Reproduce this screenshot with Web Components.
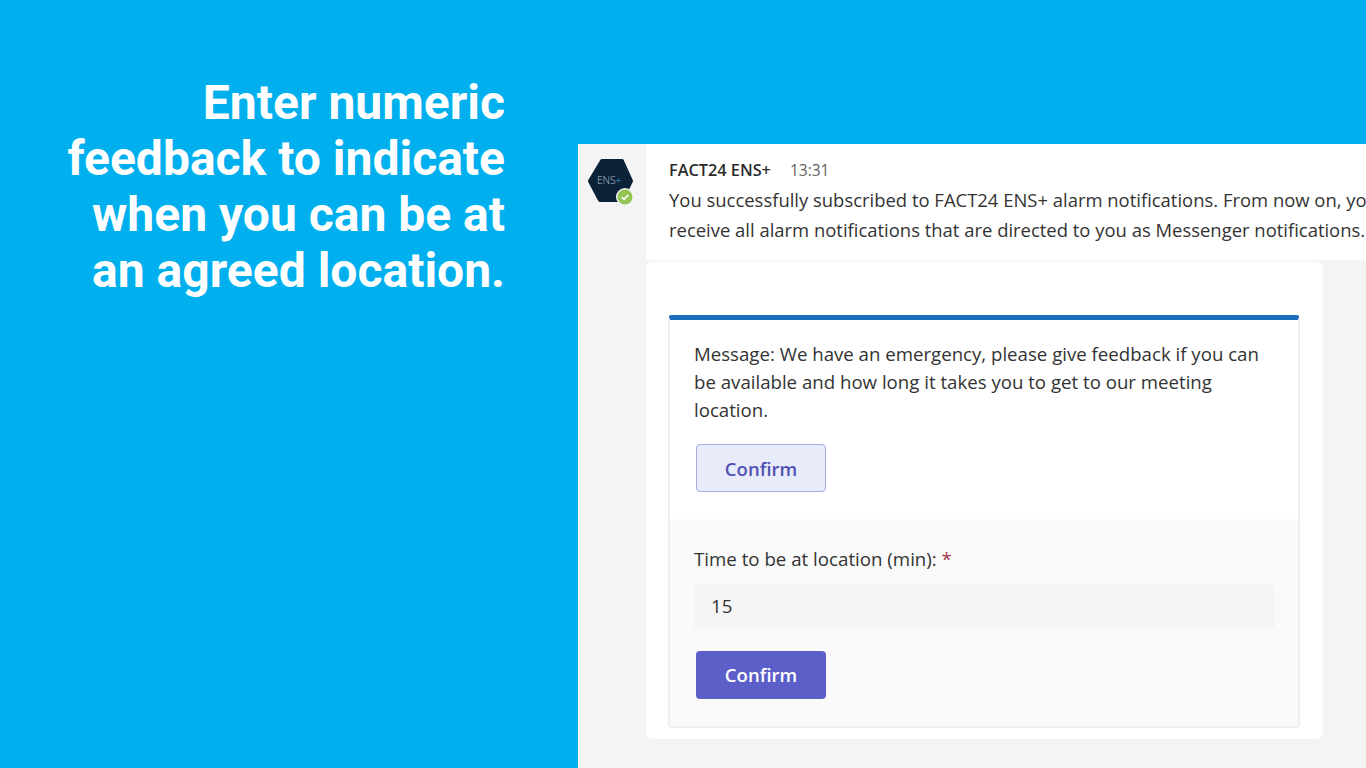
<!DOCTYPE html>
<html lang="en">
<head>
<meta charset="utf-8">
<title>FACT24 ENS+</title>
<style>
  html, body { margin: 0; height: 100%; }
  body { width: 1366px; height: 768px; overflow: hidden; background: #00afee; display: flex; }
</style>
</head>
<body>
<promo-panel>Enter numeric feedback to indicate when you can be at an agreed location.</promo-panel>
<chat-window>
  <chat-header name="FACT24 ENS+" time="13:31"><span>You successfully subscribed to FACT24 ENS+ alarm notifications. From now on, you</span><br><span>receive all alarm notifications that are directed to you as Messenger notifications.</span></chat-header>
  <alarm-card>
    <span slot="message">Message: We have an emergency, please give feedback if you can be available and how long it takes you to get to our meeting location.</span>
    <number-form slot="form" label="Time to be at location (min):" value="15"></number-form>
  </alarm-card>
</chat-window>

<script>
const TEAMS_FONT = `"Open Sans", "Noto Sans", sans-serif`;

class PromoPanel extends HTMLElement {
  constructor() {
    super();
    this.attachShadow({ mode: 'open' });
    this.shadowRoot.innerHTML = `
      <style>
        :host { display: block; flex: 0 0 578px; box-sizing: border-box; padding: 75px 73px 0 60px; }
        h1 {
          margin: 0; text-align: right; color: #fff;
          font: 700 48px/56px Roboto, sans-serif;
        }
      </style>
      <h1><slot></slot></h1>`;
  }
}

class ChatWindow extends HTMLElement {
  constructor() {
    super();
    this.attachShadow({ mode: 'open' });
    this.shadowRoot.innerHTML = `
      <style>
        :host {
          display: block; flex: 1; min-width: 0; margin-top: 144px;
          background: #f4f4f4; overflow: hidden;
          font-family: ${TEAMS_FONT}; color: #2b2b2b;
        }
      </style>
      <slot></slot>`;
  }
}

class ChatHeader extends HTMLElement {
  constructor() {
    super();
    this.attachShadow({ mode: 'open' });
    this.shadowRoot.innerHTML = `
      <style>
        :host { display: flex; height: 118px; }
        .rail { flex: 0 0 68px; box-sizing: border-box; padding: 14px 0 0 9px; }
        .avatar { position: relative; width: 46px; height: 46px; }
        .avatar svg { display: block; }
        .logo {
          position: absolute; left: 10px; top: 16px; letter-spacing: -.2px;
          font: 300 10.500px/12px "Open Sans", sans-serif; color: #b4c0ca;
        }
        .logo i { font-style: normal; color: #3a9cc8; }
        .status {
          position: absolute; left: 29px; top: 30px; width: 18px; height: 18px;
        }
        .body {
          flex: 1; min-width: 0; background: #fff; box-sizing: border-box;
          padding: 14px 0 0 23px; border-bottom: 2px solid #f6f6f6;
        }
        .meta { display: flex; align-items: baseline; gap: 19px; height: 27px; line-height: 24px; }
        .name { font-size: 16.300px; font-weight: 600; color: #2b2b2b; }
        .time { font-size: 15.500px; color: #616161; }
        .text { font-size: 18.450px; line-height: 30px; white-space: nowrap; color: #333; }
      </style>
      <div class="rail">
        <div class="avatar">
          <svg width="46" height="46" viewBox="0 0 46 46">
            <path d="M15 3H35L44 23L35 42H13L3 23Z" fill="#0b2239" stroke="#0b2239" stroke-width="4" stroke-linejoin="round"/>
          </svg>
          <span class="logo">ENS<i>+</i></span>
          <svg class="status" viewBox="0 0 18 18">
            <circle cx="9" cy="9" r="9" fill="#f4f4f4"/>
            <circle cx="9" cy="9" r="7.500" fill="#92c353"/>
            <path d="M5.700 9.200l2.300 2.200 4.300-4.400" fill="none" stroke="#fff" stroke-width="1.700"/>
          </svg>
        </div>
      </div>
      <div class="body">
        <div class="meta"><span class="name"></span><span class="time"></span></div>
        <div class="text"><slot></slot></div>
      </div>`;
  }

  connectedCallback() {
    this.shadowRoot.querySelector('.name').textContent = this.getAttribute('name');
    this.shadowRoot.querySelector('.time').textContent = this.getAttribute('time');
  }
}

class TeamsButton extends HTMLElement {
  constructor() {
    super();
    this.attachShadow({ mode: 'open' });
    this.shadowRoot.innerHTML = `
      <style>
        :host {
          display: flex; align-items: center; justify-content: center;
          box-sizing: border-box; width: 130px; height: 48px; border-radius: 4px;
          font-size: 18.500px; font-weight: 600;
          background: #e8ebfa; color: #4f52b2; border: 1px solid #a8abe0;
        }
        :host([primary]) { background: #5b5fc7; color: #fff; border: 0; padding-bottom: 1px; }
      </style>
      <slot></slot>`;
  }
}

class NumberForm extends HTMLElement {
  constructor() {
    super();
    this.attachShadow({ mode: 'open' });
    this.shadowRoot.innerHTML = `
      <style>
        :host {
          display: block; background: #fafafa; border-radius: 4px;
          padding: 25px 23px 27px 24px; font-size: 18.700px; color: #333;
        }
        .label { line-height: 30px; }
        .label b { font-weight: 400; color: #a4374f; }
        .input {
          margin-top: 10px; height: 45px; box-sizing: border-box;
          padding: 0 17px; line-height: 43px; background: #f5f5f5; border-radius: 4px;
        }
        teams-button { margin: 22px 0 0 2px; }
      </style>
      <div class="label"><span class="caption"></span> <b>*</b></div>
      <div class="input"></div>
      <teams-button primary>Confirm</teams-button>`;
  }

  connectedCallback() {
    this.shadowRoot.querySelector('.caption').textContent = this.getAttribute('label');
    this.shadowRoot.querySelector('.input').textContent = this.getAttribute('value');
  }
}

class AlarmCard extends HTMLElement {
  constructor() {
    super();
    this.attachShadow({ mode: 'open' });
    this.shadowRoot.innerHTML = `
      <style>
        :host {
          display: block; box-sizing: border-box; width: 677px; height: 477px;
          margin-left: 68px; padding: 53px 23px 0 22px;
          background: #fff; border-radius: 6px;
        }
        .inner {
          height: 413px; box-sizing: border-box; overflow: hidden;
          border: 2px solid #efefef; border-top: 5px solid #1b6ebb; border-radius: 4px;
          display: flex; flex-direction: column;
        }
        .top { flex: 0 0 199px; box-sizing: border-box; padding: 20px 24px 0 24px; }
        .msg { font-size: 18.650px; line-height: 28px; color: #333; }
        teams-button { margin: 20px 0 0 2px; }
        .form { flex: 1; }
      </style>
      <div class="inner">
        <div class="top">
          <div class="msg"><slot name="message"></slot></div>
          <teams-button>Confirm</teams-button>
        </div>
        <div class="form"><slot name="form"></slot></div>
      </div>`;
  }
}

customElements.define('promo-panel', PromoPanel);
customElements.define('chat-window', ChatWindow);
customElements.define('chat-header', ChatHeader);
customElements.define('teams-button', TeamsButton);
customElements.define('number-form', NumberForm);
customElements.define('alarm-card', AlarmCard);
</script>
</body>
</html>
